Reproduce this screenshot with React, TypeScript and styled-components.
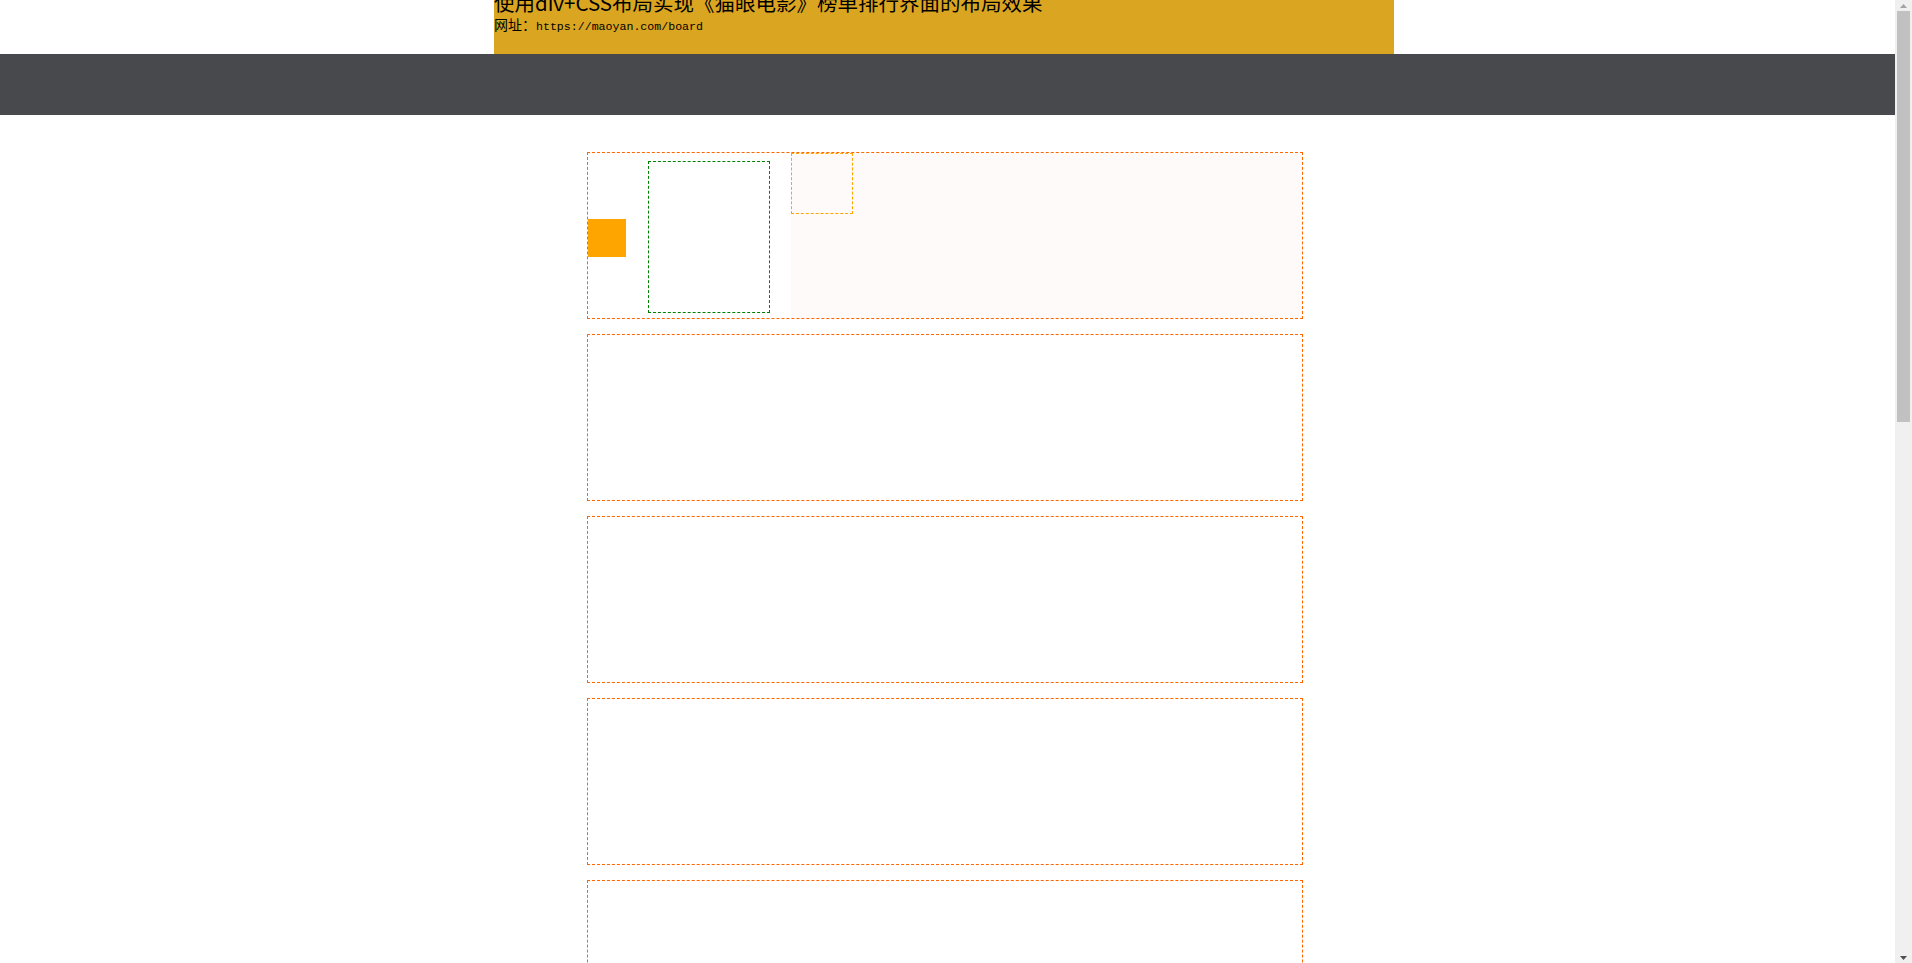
import React from "react";
import styled, { createGlobalStyle } from "styled-components";

const GlobalStyle = createGlobalStyle`
  html, body {
    margin: 0;
    padding: 0;
    background: #ffffff;
  }
  body {
    font-family: "Noto Sans CJK SC", "DejaVu Sans", sans-serif;
    color: #000;
  }
`;

const Page = styled.div`
  padding-right: 24px;
  padding-bottom: 245px;
`;

const Header = styled.header`
  width: 900px;
  height: 54px;
  margin: 0 auto;
  background: #daa520;
  overflow: hidden;
`;

const Title = styled.h1`
  margin: -9px 0 0 0;
  font-family: "Noto Sans CJK SC", "Liberation Serif", serif;
  font-size: 20.5px;
  font-weight: normal;
  line-height: 22px;
  white-space: nowrap;
`;

const Url = styled.p`
  margin: 3px 0 0 0;
  font-size: 14px;
  line-height: 16px;
  white-space: nowrap;
`;

const Mono = styled.span`
  font-family: "Liberation Mono", "DejaVu Sans Mono", monospace;
  font-size: 11.6px;
`;

const Nav = styled.nav`
  height: 61px;
  margin-right: -7px;
  background: #48494d;
`;

const Board = styled.main`
  width: 716px;
  margin: 37px auto 0;
  padding-left: 1px;
  display: flex;
  flex-direction: column;
  gap: 15px;
`;

const Item = styled.div`
  height: 165px;
  border: 1px dashed #ff6600;
  display: flex;
`;

const RankCol = styled.div`
  width: 60px;
  flex: none;
  display: flex;
  align-items: flex-start;
`;

const RankBadge = styled.div`
  width: 38px;
  height: 38px;
  margin-top: 66px;
  background: #ffa500;
`;

const Poster = styled.div`
  width: 120px;
  height: 150px;
  margin-top: 8px;
  flex: none;
  border: 1px dashed #008000;
`;

const Info = styled.div`
  flex: 1;
  margin-left: 21px;
  background: #fffafa;
`;

const Score = styled.div`
  width: 60px;
  height: 59px;
  border: 1px dashed #ffa500;
`;

const EmptyItem = styled.div`
  height: 165px;
  border: 1px dashed #ff6600;
`;

/* browser-style vertical scrollbar drawn over the right edge */
const ScrollTrack = styled.div`
  position: fixed;
  top: 0;
  right: 0;
  width: 17px;
  height: 100vh;
  background: #f0f0f0;
  display: flex;
  flex-direction: column;
  align-items: center;
`;

const ArrowBox = styled.div`
  height: 11px;
  width: 17px;
  flex: none;
  display: flex;
  align-items: center;
  justify-content: center;
`;

const Thumb = styled.div`
  width: 13px;
  height: 411px;
  flex: none;
  background: #c1c1c1;
`;

const Spacer = styled.div`
  flex: 1;
`;

export default function App() {
  return (
    <>
      <GlobalStyle />
      <Page>
        <Header>
          <Title>使用div+CSS布局实现《猫眼电影》榜单排行界面的布局效果</Title>
          <Url>
            网址：<Mono>https://maoyan.com/board</Mono>
          </Url>
        </Header>
        <Nav />
        <Board>
          <Item>
            <RankCol>
              <RankBadge />
            </RankCol>
            <Poster />
            <Info>
              <Score />
            </Info>
          </Item>
          {Array.from({ length: 9 }).map((_, i) => (
            <EmptyItem key={i} />
          ))}
        </Board>
      </Page>
      <ScrollTrack>
        <ArrowBox>
          <svg width="7" height="4" viewBox="0 0 7 4">
            <path d="M3.5 0 L7 4 L0 4 Z" fill="#a3a3a3" />
          </svg>
        </ArrowBox>
        <Thumb />
        <Spacer />
        <ArrowBox>
          <svg width="7" height="4" viewBox="0 0 7 4">
            <path d="M0 0 L7 0 L3.5 4 Z" fill="#505050" />
          </svg>
        </ArrowBox>
      </ScrollTrack>
    </>
  );
}
